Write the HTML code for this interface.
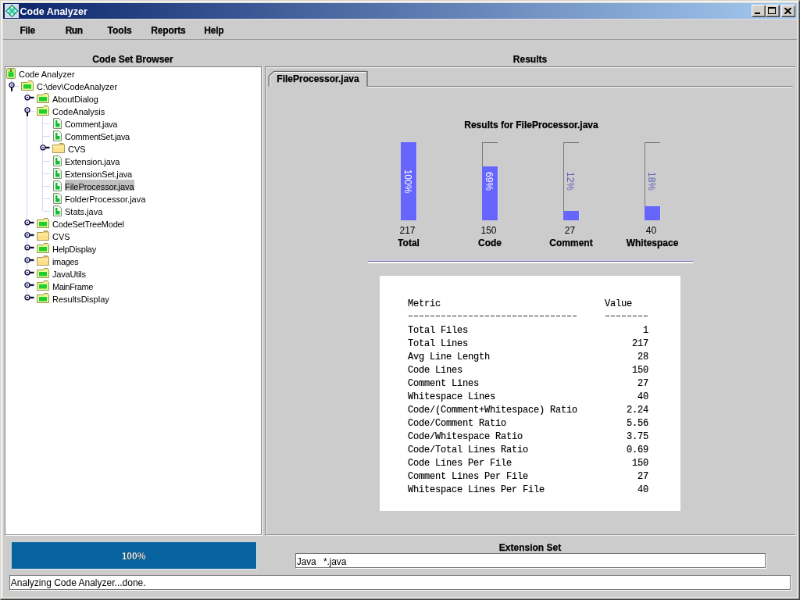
<!DOCTYPE html>
<html><head><meta charset="utf-8"><title>Code Analyzer</title>
<style>
html,body{margin:0;padding:0;background:#d4d0c8;overflow:hidden;}
body{width:800px;height:600px;position:relative;font-family:"Liberation Sans",sans-serif;}
#root{position:absolute;left:0;top:0;width:1024px;height:768px;transform:scale(0.78125);transform-origin:0 0;background:#d4d0c8;overflow:hidden;will-change:transform;}
.abs{position:absolute;}
.b{font-weight:bold;}
.lbl{position:absolute;font-size:12px;font-weight:bold;color:#000;white-space:nowrap;line-height:14px;-webkit-text-stroke:0.25px #000;}
.tr{position:absolute;font-size:11px;color:#000;white-space:nowrap;line-height:16px;height:16px;padding:0 1px;}
.mono{font-family:"Liberation Mono",monospace;font-size:12px;letter-spacing:-0.2px;line-height:17px;white-space:pre;color:#000;position:absolute;-webkit-text-stroke:0.15px #000;}
</style></head>
<body>
<div id="root">
<div class="abs" style="left:0;top:0;width:1024px;height:768px;background:#d4d0c8;box-sizing:border-box;border:1px solid;border-color:#d4d0c8 #404040 #404040 #d4d0c8;"></div>
<div class="abs" style="left:1px;top:1px;width:1022px;height:766px;box-sizing:border-box;border:1px solid;border-color:#ffffff #808080 #808080 #ffffff;"></div>
<div class="abs" style="left:2px;top:2px;width:1020px;height:764px;box-sizing:border-box;border:2px solid #e4e2dc;"></div>
<div class="abs" style="left:4px;top:4px;width:1016px;height:20px;background:linear-gradient(to right,#0a246a 0%,#a6caf0 100%);"></div>
<svg class="abs" style="left:6px;top:5px" width="18" height="18" viewBox="0 0 18 18">
<rect x="0" y="0" width="18" height="18" fill="#dadaea"/>
<polygon points="9.3,1.6 16.7,9 9.3,16.4 1.9,9" fill="#5ce0ba" stroke="#148a68" stroke-width="1.3"/>
<path d="M5.6,5.3 L13,12.7 M13,5.3 L5.6,12.7" stroke="#2aa482" stroke-width="0.9"/>
<circle cx="9.3" cy="4.4" r="1.5" fill="#c4fff4"/><circle cx="13.9" cy="9" r="1.5" fill="#c4fff4"/>
<circle cx="9.3" cy="13.6" r="1.5" fill="#c4fff4"/><circle cx="4.7" cy="9" r="1.5" fill="#c4fff4"/>
<circle cx="9.3" cy="9" r="1.3" fill="#2cae8c"/>
</svg>
<div class="abs b" style="left:25.5px;top:7.5px;font-size:12.5px;line-height:15px;color:#fff;white-space:nowrap;">Code Analyzer</div>
<div class="abs" style="left:962px;top:6px;width:18px;height:16px;background:#d4d0c8;box-sizing:border-box;border:1px solid;border-color:#fff #404040 #404040 #fff;"></div><div class="abs" style="left:963px;top:7px;width:16px;height:14px;box-sizing:border-box;border:1px solid;border-color:#d4d0c8 #808080 #808080 #d4d0c8;"></div><div class="abs" style="left:966px;top:16px;width:7px;height:2px;background:#000;"></div>
<div class="abs" style="left:980px;top:6px;width:18px;height:16px;background:#d4d0c8;box-sizing:border-box;border:1px solid;border-color:#fff #404040 #404040 #fff;"></div><div class="abs" style="left:981px;top:7px;width:16px;height:14px;box-sizing:border-box;border:1px solid;border-color:#d4d0c8 #808080 #808080 #d4d0c8;"></div><div class="abs" style="left:983px;top:9px;width:10px;height:9px;box-sizing:border-box;border:1px solid #000;border-top:2px solid #000;"></div>
<div class="abs" style="left:1000px;top:6px;width:18px;height:16px;background:#d4d0c8;box-sizing:border-box;border:1px solid;border-color:#fff #404040 #404040 #fff;"></div><div class="abs" style="left:1001px;top:7px;width:16px;height:14px;box-sizing:border-box;border:1px solid;border-color:#d4d0c8 #808080 #808080 #d4d0c8;"></div><svg class="abs" style="left:1004px;top:10px" width="9" height="8" viewBox="0 0 9 8"><path d="M0.5,0 L8.5,8 M8.5,0 L0.5,8" stroke="#000" stroke-width="2"/></svg>
<div class="abs" style="left:4px;top:24px;width:1016px;height:740px;background:#cccccc;"></div>
<div class="abs" style="left:4px;top:24px;width:1016px;height:1px;background:#dcdce6;"></div>
<div class="abs" style="left:4px;top:50px;width:1016px;height:1px;background:#999999;"></div>
<div class="lbl" style="left:25.6px;top:32px;letter-spacing:-0.4px;">File</div>
<div class="lbl" style="left:83.7px;top:32px;letter-spacing:-0.5px;">Run</div>
<div class="lbl" style="left:137.6px;top:32px;letter-spacing:0px;">Tools</div>
<div class="lbl" style="left:193.3px;top:32px;letter-spacing:-0.15px;">Reports</div>
<div class="lbl" style="left:261.3px;top:32px;letter-spacing:-0.2px;">Help</div>
<div class="lbl" style="left:4px;width:332px;text-align:center;top:69px;">Code Set Browser</div>
<div class="lbl" style="left:339px;width:679px;text-align:center;top:69px;">Results</div>
<div class="abs" style="left:7px;top:86px;width:329px;height:600px;box-sizing:border-box;border:1px solid #ffffff;"></div><div class="abs" style="left:6px;top:85px;width:329px;height:600px;box-sizing:border-box;border:1px solid #808080;background:#fff;"></div>
<div class="abs" style="left:14px;top:101px;width:1px;height:6px;background:#d4d4fa;"></div>
<div class="abs" style="left:15px;top:110px;width:10px;height:1px;background:#d4d4fa;"></div>
<div class="abs" style="left:34px;top:116px;width:1px;height:266px;background:#d4d4fa;"></div>
<div class="abs" style="left:54px;top:148px;width:1px;height:122px;background:#d4d4fa;"></div>
<svg class="abs" style="left:8.2px;top:87px" width="13" height="15" viewBox="0 0 13 15">
<rect x="0.5" y="0.5" width="11" height="13" rx="1.5" fill="#ccff88" stroke="#989058" stroke-width="1"/>
<rect x="2" y="2" width="8" height="4" fill="#aaee66"/>
<rect x="2.5" y="5.5" width="7" height="6" fill="#22cc33"/>
<rect x="5.2" y="1.5" width="1.6" height="3.5" fill="#665522"/>
</svg>
<div class="tr" style="left:23px;top:87px;">Code Analyzer</div>
<svg class="abs" style="left:0;top:0;overflow:visible" width="1" height="1">
<rect x="14" y="111.8" width="2" height="5" fill="#000011"/>
<circle cx="15" cy="108.8" r="3.05" fill="#e4e4ff" stroke="#000033" stroke-width="1.2"/>
<circle cx="15" cy="108.8" r="0.85" fill="#111144"/>
</svg>
<svg class="abs" style="left:27.4px;top:103px" width="16" height="14" viewBox="0 0 16 14">
<path d="M0.5,2.5 L8,2.5 L9.5,0.5 L14,0.5 L15.5,2.5 L15.5,12.5 L0.5,12.5 Z" fill="#e0ff90" stroke="#a09050" stroke-width="1"/><path d="M9.5,1 L14,1 L15,2.5 L8.5,2.5 Z" fill="#f0dc90"/><rect x="3" y="5" width="10" height="5.5" fill="#22cc33"/>
</svg>
<div class="tr" style="left:46px;top:103px;letter-spacing:-0.05px;">C:\dev\CodeAnalyzer</div>
<div class="abs" style="left:35px;top:126px;width:9px;height:1px;background:#d4d4fa;"></div>
<svg class="abs" style="left:0;top:0;overflow:visible" width="1" height="1">
<rect x="38" y="123.8" width="5.5" height="2" fill="#000011"/>
<circle cx="35" cy="124.8" r="3.05" fill="#e4e4ff" stroke="#000033" stroke-width="1.2"/>
<circle cx="35" cy="124.8" r="0.85" fill="#111144"/>
</svg>
<svg class="abs" style="left:47.4px;top:119px" width="16" height="14" viewBox="0 0 16 14">
<path d="M0.5,2.5 L8,2.5 L9.5,0.5 L14,0.5 L15.5,2.5 L15.5,12.5 L0.5,12.5 Z" fill="#e0ff90" stroke="#a09050" stroke-width="1"/><path d="M9.5,1 L14,1 L15,2.5 L8.5,2.5 Z" fill="#f0dc90"/><rect x="3" y="5" width="10" height="5.5" fill="#22cc33"/>
</svg>
<div class="tr" style="left:66px;top:119px;letter-spacing:-0.1px;">AboutDialog</div>
<div class="abs" style="left:35px;top:142px;width:9px;height:1px;background:#d4d4fa;"></div>
<svg class="abs" style="left:0;top:0;overflow:visible" width="1" height="1">
<rect x="34" y="143.8" width="2" height="5" fill="#000011"/>
<circle cx="35" cy="140.8" r="3.05" fill="#e4e4ff" stroke="#000033" stroke-width="1.2"/>
<circle cx="35" cy="140.8" r="0.85" fill="#111144"/>
</svg>
<svg class="abs" style="left:47.4px;top:135px" width="16" height="14" viewBox="0 0 16 14">
<path d="M0.5,2.5 L8,2.5 L9.5,0.5 L14,0.5 L15.5,2.5 L15.5,12.5 L0.5,12.5 Z" fill="#e0ff90" stroke="#a09050" stroke-width="1"/><path d="M9.5,1 L14,1 L15,2.5 L8.5,2.5 Z" fill="#f0dc90"/><rect x="3" y="5" width="10" height="5.5" fill="#22cc33"/>
</svg>
<div class="tr" style="left:66px;top:135px;">CodeAnalysis</div>
<div class="abs" style="left:55px;top:158px;width:9px;height:1px;background:#d4d4fa;"></div>
<svg class="abs" style="left:68px;top:150.5px" width="12" height="15" viewBox="0 0 12 15">
<path d="M0.5,0.5 L7.5,0.5 L10.5,3.5 L10.5,13.5 L0.5,13.5 Z" fill="#ffffff" stroke="#8a8a80" stroke-width="1"/>
<path d="M1.5,1.5 L7,1.5 L9.5,4 L9.5,12.5 L1.5,12.5 Z" fill="none" stroke="#ccffcc" stroke-width="1"/>
<path d="M3,3 L5.5,3 L5.5,7 L8.5,7 L8.5,11.5 L3,11.5 Z" fill="#11bb33"/>
</svg>
<div class="tr" style="left:82px;top:151px;letter-spacing:-0.33px;">Comment.java</div>
<div class="abs" style="left:55px;top:174px;width:9px;height:1px;background:#d4d4fa;"></div>
<svg class="abs" style="left:68px;top:166.5px" width="12" height="15" viewBox="0 0 12 15">
<path d="M0.5,0.5 L7.5,0.5 L10.5,3.5 L10.5,13.5 L0.5,13.5 Z" fill="#ffffff" stroke="#8a8a80" stroke-width="1"/>
<path d="M1.5,1.5 L7,1.5 L9.5,4 L9.5,12.5 L1.5,12.5 Z" fill="none" stroke="#ccffcc" stroke-width="1"/>
<path d="M3,3 L5.5,3 L5.5,7 L8.5,7 L8.5,11.5 L3,11.5 Z" fill="#11bb33"/>
</svg>
<div class="tr" style="left:82px;top:167px;letter-spacing:-0.3px;">CommentSet.java</div>
<div class="abs" style="left:55px;top:190px;width:9px;height:1px;background:#d4d4fa;"></div>
<svg class="abs" style="left:0;top:0;overflow:visible" width="1" height="1">
<rect x="58" y="187.8" width="5.5" height="2" fill="#000011"/>
<circle cx="55" cy="188.8" r="3.05" fill="#e4e4ff" stroke="#000033" stroke-width="1.2"/>
<circle cx="55" cy="188.8" r="0.85" fill="#111144"/>
</svg>
<svg class="abs" style="left:67.4px;top:183px" width="16" height="14" viewBox="0 0 16 14">
<path d="M0.5,2.5 L8,2.5 L9.5,0.5 L14,0.5 L15.5,2.5 L15.5,12.5 L0.5,12.5 Z" fill="#ffe08a" stroke="#a89858" stroke-width="1"/><path d="M9.5,1 L14,1 L15,2.5 L8.5,2.5 Z" fill="#c8ac68"/><rect x="1.5" y="3.5" width="13" height="3" fill="#ffeaa0"/>
</svg>
<div class="tr" style="left:86px;top:183px;">CVS</div>
<div class="abs" style="left:55px;top:206px;width:9px;height:1px;background:#d4d4fa;"></div>
<svg class="abs" style="left:68px;top:198.5px" width="12" height="15" viewBox="0 0 12 15">
<path d="M0.5,0.5 L7.5,0.5 L10.5,3.5 L10.5,13.5 L0.5,13.5 Z" fill="#ffffff" stroke="#8a8a80" stroke-width="1"/>
<path d="M1.5,1.5 L7,1.5 L9.5,4 L9.5,12.5 L1.5,12.5 Z" fill="none" stroke="#ccffcc" stroke-width="1"/>
<path d="M3,3 L5.5,3 L5.5,7 L8.5,7 L8.5,11.5 L3,11.5 Z" fill="#11bb33"/>
</svg>
<div class="tr" style="left:82px;top:199px;letter-spacing:-0.1px;">Extension.java</div>
<div class="abs" style="left:55px;top:222px;width:9px;height:1px;background:#d4d4fa;"></div>
<svg class="abs" style="left:68px;top:214.5px" width="12" height="15" viewBox="0 0 12 15">
<path d="M0.5,0.5 L7.5,0.5 L10.5,3.5 L10.5,13.5 L0.5,13.5 Z" fill="#ffffff" stroke="#8a8a80" stroke-width="1"/>
<path d="M1.5,1.5 L7,1.5 L9.5,4 L9.5,12.5 L1.5,12.5 Z" fill="none" stroke="#ccffcc" stroke-width="1"/>
<path d="M3,3 L5.5,3 L5.5,7 L8.5,7 L8.5,11.5 L3,11.5 Z" fill="#11bb33"/>
</svg>
<div class="tr" style="left:82px;top:215px;letter-spacing:-0.12px;">ExtensionSet.java</div>
<div class="abs" style="left:55px;top:238px;width:9px;height:1px;background:#d4d4fa;"></div>
<svg class="abs" style="left:68px;top:230.5px" width="12" height="15" viewBox="0 0 12 15">
<path d="M0.5,0.5 L7.5,0.5 L10.5,3.5 L10.5,13.5 L0.5,13.5 Z" fill="#ffffff" stroke="#8a8a80" stroke-width="1"/>
<path d="M1.5,1.5 L7,1.5 L9.5,4 L9.5,12.5 L1.5,12.5 Z" fill="none" stroke="#ccffcc" stroke-width="1"/>
<path d="M3,3 L5.5,3 L5.5,7 L8.5,7 L8.5,11.5 L3,11.5 Z" fill="#11bb33"/>
</svg>
<div class="abs" style="left:82.5px;top:230px;width:89px;height:14px;background:#c0c0c0;"></div>
<div class="tr" style="left:82px;top:231px;letter-spacing:-0.08px;">FileProcessor.java</div>
<div class="abs" style="left:55px;top:254px;width:9px;height:1px;background:#d4d4fa;"></div>
<svg class="abs" style="left:68px;top:246.5px" width="12" height="15" viewBox="0 0 12 15">
<path d="M0.5,0.5 L7.5,0.5 L10.5,3.5 L10.5,13.5 L0.5,13.5 Z" fill="#ffffff" stroke="#8a8a80" stroke-width="1"/>
<path d="M1.5,1.5 L7,1.5 L9.5,4 L9.5,12.5 L1.5,12.5 Z" fill="none" stroke="#ccffcc" stroke-width="1"/>
<path d="M3,3 L5.5,3 L5.5,7 L8.5,7 L8.5,11.5 L3,11.5 Z" fill="#11bb33"/>
</svg>
<div class="tr" style="left:82px;top:247px;">FolderProcessor.java</div>
<div class="abs" style="left:55px;top:270px;width:9px;height:1px;background:#d4d4fa;"></div>
<svg class="abs" style="left:68px;top:262.5px" width="12" height="15" viewBox="0 0 12 15">
<path d="M0.5,0.5 L7.5,0.5 L10.5,3.5 L10.5,13.5 L0.5,13.5 Z" fill="#ffffff" stroke="#8a8a80" stroke-width="1"/>
<path d="M1.5,1.5 L7,1.5 L9.5,4 L9.5,12.5 L1.5,12.5 Z" fill="none" stroke="#ccffcc" stroke-width="1"/>
<path d="M3,3 L5.5,3 L5.5,7 L8.5,7 L8.5,11.5 L3,11.5 Z" fill="#11bb33"/>
</svg>
<div class="tr" style="left:82px;top:263px;">Stats.java</div>
<div class="abs" style="left:35px;top:286px;width:9px;height:1px;background:#d4d4fa;"></div>
<svg class="abs" style="left:0;top:0;overflow:visible" width="1" height="1">
<rect x="38" y="283.8" width="5.5" height="2" fill="#000011"/>
<circle cx="35" cy="284.8" r="3.05" fill="#e4e4ff" stroke="#000033" stroke-width="1.2"/>
<circle cx="35" cy="284.8" r="0.85" fill="#111144"/>
</svg>
<svg class="abs" style="left:47.4px;top:279px" width="16" height="14" viewBox="0 0 16 14">
<path d="M0.5,2.5 L8,2.5 L9.5,0.5 L14,0.5 L15.5,2.5 L15.5,12.5 L0.5,12.5 Z" fill="#e0ff90" stroke="#a09050" stroke-width="1"/><path d="M9.5,1 L14,1 L15,2.5 L8.5,2.5 Z" fill="#f0dc90"/><rect x="3" y="5" width="10" height="5.5" fill="#22cc33"/>
</svg>
<div class="tr" style="left:66px;top:279px;letter-spacing:-0.2px;">CodeSetTreeModel</div>
<div class="abs" style="left:35px;top:302px;width:9px;height:1px;background:#d4d4fa;"></div>
<svg class="abs" style="left:0;top:0;overflow:visible" width="1" height="1">
<rect x="38" y="299.8" width="5.5" height="2" fill="#000011"/>
<circle cx="35" cy="300.8" r="3.05" fill="#e4e4ff" stroke="#000033" stroke-width="1.2"/>
<circle cx="35" cy="300.8" r="0.85" fill="#111144"/>
</svg>
<svg class="abs" style="left:47.4px;top:295px" width="16" height="14" viewBox="0 0 16 14">
<path d="M0.5,2.5 L8,2.5 L9.5,0.5 L14,0.5 L15.5,2.5 L15.5,12.5 L0.5,12.5 Z" fill="#ffe08a" stroke="#a89858" stroke-width="1"/><path d="M9.5,1 L14,1 L15,2.5 L8.5,2.5 Z" fill="#c8ac68"/><rect x="1.5" y="3.5" width="13" height="3" fill="#ffeaa0"/>
</svg>
<div class="tr" style="left:66px;top:295px;">CVS</div>
<div class="abs" style="left:35px;top:318px;width:9px;height:1px;background:#d4d4fa;"></div>
<svg class="abs" style="left:0;top:0;overflow:visible" width="1" height="1">
<rect x="38" y="315.8" width="5.5" height="2" fill="#000011"/>
<circle cx="35" cy="316.8" r="3.05" fill="#e4e4ff" stroke="#000033" stroke-width="1.2"/>
<circle cx="35" cy="316.8" r="0.85" fill="#111144"/>
</svg>
<svg class="abs" style="left:47.4px;top:311px" width="16" height="14" viewBox="0 0 16 14">
<path d="M0.5,2.5 L8,2.5 L9.5,0.5 L14,0.5 L15.5,2.5 L15.5,12.5 L0.5,12.5 Z" fill="#e0ff90" stroke="#a09050" stroke-width="1"/><path d="M9.5,1 L14,1 L15,2.5 L8.5,2.5 Z" fill="#f0dc90"/><rect x="3" y="5" width="10" height="5.5" fill="#22cc33"/>
</svg>
<div class="tr" style="left:66px;top:311px;letter-spacing:-0.25px;">HelpDisplay</div>
<div class="abs" style="left:35px;top:334px;width:9px;height:1px;background:#d4d4fa;"></div>
<svg class="abs" style="left:0;top:0;overflow:visible" width="1" height="1">
<rect x="38" y="331.8" width="5.5" height="2" fill="#000011"/>
<circle cx="35" cy="332.8" r="3.05" fill="#e4e4ff" stroke="#000033" stroke-width="1.2"/>
<circle cx="35" cy="332.8" r="0.85" fill="#111144"/>
</svg>
<svg class="abs" style="left:47.4px;top:327px" width="16" height="14" viewBox="0 0 16 14">
<path d="M0.5,2.5 L8,2.5 L9.5,0.5 L14,0.5 L15.5,2.5 L15.5,12.5 L0.5,12.5 Z" fill="#ffe08a" stroke="#a89858" stroke-width="1"/><path d="M9.5,1 L14,1 L15,2.5 L8.5,2.5 Z" fill="#c8ac68"/><rect x="1.5" y="3.5" width="13" height="3" fill="#ffeaa0"/>
</svg>
<div class="tr" style="left:66px;top:327px;letter-spacing:-0.35px;">images</div>
<div class="abs" style="left:35px;top:350px;width:9px;height:1px;background:#d4d4fa;"></div>
<svg class="abs" style="left:0;top:0;overflow:visible" width="1" height="1">
<rect x="38" y="347.8" width="5.5" height="2" fill="#000011"/>
<circle cx="35" cy="348.8" r="3.05" fill="#e4e4ff" stroke="#000033" stroke-width="1.2"/>
<circle cx="35" cy="348.8" r="0.85" fill="#111144"/>
</svg>
<svg class="abs" style="left:47.4px;top:343px" width="16" height="14" viewBox="0 0 16 14">
<path d="M0.5,2.5 L8,2.5 L9.5,0.5 L14,0.5 L15.5,2.5 L15.5,12.5 L0.5,12.5 Z" fill="#e0ff90" stroke="#a09050" stroke-width="1"/><path d="M9.5,1 L14,1 L15,2.5 L8.5,2.5 Z" fill="#f0dc90"/><rect x="3" y="5" width="10" height="5.5" fill="#22cc33"/>
</svg>
<div class="tr" style="left:66px;top:343px;letter-spacing:-0.2px;">JavaUtils</div>
<div class="abs" style="left:35px;top:366px;width:9px;height:1px;background:#d4d4fa;"></div>
<svg class="abs" style="left:0;top:0;overflow:visible" width="1" height="1">
<rect x="38" y="363.8" width="5.5" height="2" fill="#000011"/>
<circle cx="35" cy="364.8" r="3.05" fill="#e4e4ff" stroke="#000033" stroke-width="1.2"/>
<circle cx="35" cy="364.8" r="0.85" fill="#111144"/>
</svg>
<svg class="abs" style="left:47.4px;top:359px" width="16" height="14" viewBox="0 0 16 14">
<path d="M0.5,2.5 L8,2.5 L9.5,0.5 L14,0.5 L15.5,2.5 L15.5,12.5 L0.5,12.5 Z" fill="#e0ff90" stroke="#a09050" stroke-width="1"/><path d="M9.5,1 L14,1 L15,2.5 L8.5,2.5 Z" fill="#f0dc90"/><rect x="3" y="5" width="10" height="5.5" fill="#22cc33"/>
</svg>
<div class="tr" style="left:66px;top:359px;letter-spacing:-0.4px;">MainFrame</div>
<div class="abs" style="left:35px;top:382px;width:9px;height:1px;background:#d4d4fa;"></div>
<svg class="abs" style="left:0;top:0;overflow:visible" width="1" height="1">
<rect x="38" y="379.8" width="5.5" height="2" fill="#000011"/>
<circle cx="35" cy="380.8" r="3.05" fill="#e4e4ff" stroke="#000033" stroke-width="1.2"/>
<circle cx="35" cy="380.8" r="0.85" fill="#111144"/>
</svg>
<svg class="abs" style="left:47.4px;top:375px" width="16" height="14" viewBox="0 0 16 14">
<path d="M0.5,2.5 L8,2.5 L9.5,0.5 L14,0.5 L15.5,2.5 L15.5,12.5 L0.5,12.5 Z" fill="#e0ff90" stroke="#a09050" stroke-width="1"/><path d="M9.5,1 L14,1 L15,2.5 L8.5,2.5 Z" fill="#f0dc90"/><rect x="3" y="5" width="10" height="5.5" fill="#22cc33"/>
</svg>
<div class="tr" style="left:66px;top:375px;">ResultsDisplay</div>
<div class="abs" style="left:340px;top:86px;width:679px;height:600px;box-sizing:border-box;border:1px solid #f0f0f0;"></div><div class="abs" style="left:339px;top:85px;width:679px;height:600px;box-sizing:border-box;border:1px solid #808080;"></div>
<svg class="abs" style="left:343px;top:90px" width="672" height="24" viewBox="0 0 672 24">
<path d="M1.2,20.5 L1.2,7.5 L7.5,1.5 L127,1.5 L127,20.5" fill="none" stroke="#6a6a6a" stroke-width="1.4"/>
<path d="M2.5,20.5 L2.5,8 L8,2.5 L126,2.5" fill="none" stroke="#ffffff" stroke-width="1"/>
<path d="M127,20.5 L671.5,20.5" fill="none" stroke="#777777" stroke-width="1"/>
<path d="M127.5,21.5 L671,21.5" fill="none" stroke="#ffffff" stroke-width="1"/>
</svg>
<div class="lbl" style="left:354.3px;top:94px;">FileProcessor.java</div>
<div class="lbl" style="left:480px;width:400px;text-align:center;top:153px;">Results for FileProcessor.java</div>
<div class="abs" style="left:513px;top:182px;width:20px;height:100px;box-sizing:border-box;border-left:1px solid #7a7a7a;border-top:1px solid #7a7a7a;"></div><div class="abs" style="left:533px;top:182px;width:1px;height:100px;background:#d8d8e2;"></div><div class="abs" style="left:513px;top:182px;width:20px;height:100px;background:#6666ff;"></div><div class="abs" style="left:513px;top:182px;width:20px;height:100px;overflow:hidden;"><div class="abs" style="left:0;top:50.0px;width:0;height:0;"><div style="position:absolute;left:9px;top:0;transform:translate(-50%,-50%) rotate(90deg);font-size:12px;line-height:14px;color:#ffffff;white-space:nowrap;">100%</div></div></div><div class="abs" style="left:461.5px;width:120px;text-align:center;top:288px;font-size:12px;line-height:14px;">217</div><div class="lbl" style="left:463px;width:120px;text-align:center;top:304px;">Total</div>
<div class="abs" style="left:617px;top:182px;width:20px;height:100px;box-sizing:border-box;border-left:1px solid #7a7a7a;border-top:1px solid #7a7a7a;"></div><div class="abs" style="left:637px;top:213px;width:1px;height:69px;background:#d8d8e2;"></div><div class="abs" style="left:617px;top:213px;width:20px;height:69px;background:#6666ff;"></div><div class="abs" style="left:617px;top:182px;width:20px;height:31px;overflow:hidden;"><div class="abs" style="left:0;top:50.0px;width:0;height:0;"><div style="position:absolute;left:9px;top:0;transform:translate(-50%,-50%) rotate(90deg);font-size:12px;line-height:14px;color:#6262b8;white-space:nowrap;">69%</div></div></div><div class="abs" style="left:617px;top:213px;width:20px;height:69px;overflow:hidden;"><div class="abs" style="left:0;top:19.0px;width:0;height:0;"><div style="position:absolute;left:9px;top:0;transform:translate(-50%,-50%) rotate(90deg);font-size:12px;line-height:14px;color:#ffffff;white-space:nowrap;">69%</div></div></div><div class="abs" style="left:565.5px;width:120px;text-align:center;top:288px;font-size:12px;line-height:14px;">150</div><div class="lbl" style="left:567px;width:120px;text-align:center;top:304px;">Code</div>
<div class="abs" style="left:721px;top:182px;width:20px;height:100px;box-sizing:border-box;border-left:1px solid #7a7a7a;border-top:1px solid #7a7a7a;"></div><div class="abs" style="left:741px;top:270px;width:1px;height:12px;background:#d8d8e2;"></div><div class="abs" style="left:721px;top:270px;width:20px;height:12px;background:#6666ff;"></div><div class="abs" style="left:721px;top:182px;width:20px;height:88px;overflow:hidden;"><div class="abs" style="left:0;top:50.0px;width:0;height:0;"><div style="position:absolute;left:9px;top:0;transform:translate(-50%,-50%) rotate(90deg);font-size:12px;line-height:14px;color:#6262b8;white-space:nowrap;">12%</div></div></div><div class="abs" style="left:721px;top:270px;width:20px;height:12px;overflow:hidden;"><div class="abs" style="left:0;top:-38.0px;width:0;height:0;"><div style="position:absolute;left:9px;top:0;transform:translate(-50%,-50%) rotate(90deg);font-size:12px;line-height:14px;color:#ffffff;white-space:nowrap;">12%</div></div></div><div class="abs" style="left:669.5px;width:120px;text-align:center;top:288px;font-size:12px;line-height:14px;">27</div><div class="lbl" style="left:671px;width:120px;text-align:center;top:304px;">Comment</div>
<div class="abs" style="left:825px;top:182px;width:20px;height:100px;box-sizing:border-box;border-left:1px solid #7a7a7a;border-top:1px solid #7a7a7a;"></div><div class="abs" style="left:845px;top:264px;width:1px;height:18px;background:#d8d8e2;"></div><div class="abs" style="left:825px;top:264px;width:20px;height:18px;background:#6666ff;"></div><div class="abs" style="left:825px;top:182px;width:20px;height:82px;overflow:hidden;"><div class="abs" style="left:0;top:50.0px;width:0;height:0;"><div style="position:absolute;left:9px;top:0;transform:translate(-50%,-50%) rotate(90deg);font-size:12px;line-height:14px;color:#6262b8;white-space:nowrap;">18%</div></div></div><div class="abs" style="left:825px;top:264px;width:20px;height:18px;overflow:hidden;"><div class="abs" style="left:0;top:-32.0px;width:0;height:0;"><div style="position:absolute;left:9px;top:0;transform:translate(-50%,-50%) rotate(90deg);font-size:12px;line-height:14px;color:#ffffff;white-space:nowrap;">18%</div></div></div><div class="abs" style="left:773.5px;width:120px;text-align:center;top:288px;font-size:12px;line-height:14px;">40</div><div class="lbl" style="left:775px;width:120px;text-align:center;top:304px;">Whitespace</div>
<div class="abs" style="left:471px;top:332.4px;width:416px;height:1.6px;background:#ccccde;"></div>
<div class="abs" style="left:471px;top:334px;width:416px;height:1.3px;background:#7070a0;"></div>
<div class="abs" style="left:471px;top:335.3px;width:416px;height:1.5px;background:#ffffff;"></div>
<div class="abs" style="left:486px;top:353px;width:385px;height:301px;background:#fff;"></div>
<div class="mono" style="left:522px;top:381px;">Metric                              Value

Total Files                                1
Total Lines                              217
Avg Line Length                           28
Code Lines                               150
Comment Lines                             27
Whitespace Lines                          40
Code/(Comment+Whitespace) Ratio         2.24
Code/Comment Ratio                      5.56
Code/Whitespace Ratio                   3.75
Code/Total Lines Ratio                  0.69
Code Lines Per File                      150
Comment Lines Per File                    27
Whitespace Lines Per File                 40</div>
<div class="abs" style="left:522.6px;top:404.4px;width:215.6px;height:1px;background:repeating-linear-gradient(to right,#2a2a2a 0,#2a2a2a 5.2px,transparent 5.2px,transparent 7px);"></div>
<div class="abs" style="left:774.6px;top:404.4px;width:54.6px;height:1px;background:repeating-linear-gradient(to right,#2a2a2a 0,#2a2a2a 5.2px,transparent 5.2px,transparent 7px);"></div>
<div class="abs" style="left:14.5px;top:694px;width:314.5px;height:35px;background:#e4ecf4;"></div>
<div class="abs" style="left:14.5px;top:694px;width:313.5px;height:34px;background:#06639f;"></div>
<div class="lbl" style="left:14px;width:314px;text-align:center;top:705px;color:#fff;">100%</div>
<div class="lbl" style="left:339px;width:679px;text-align:center;top:694px;">Extension Set</div>
<div class="abs" style="left:379px;top:709px;width:602px;height:19px;box-sizing:border-box;border:1px solid #ffffff;"></div><div class="abs" style="left:378px;top:708px;width:602px;height:19px;box-sizing:border-box;border:1px solid #747474;background:#fff;"></div><div class="abs" style="left:379.8px;top:711.5px;font-size:12px;line-height:14px;white-space:pre;"><span style="letter-spacing:-0.15px">Java   *.java</span></div>
<div class="abs" style="left:13px;top:737px;width:1000px;height:19px;box-sizing:border-box;border:1px solid #ffffff;"></div><div class="abs" style="left:12px;top:736px;width:1000px;height:19px;box-sizing:border-box;border:1px solid #747474;background:#fff;"></div><div class="abs" style="left:13.8px;top:739px;font-size:12px;line-height:14px;white-space:pre;">Analyzing Code Analyzer...done.</div>
</div>
</body></html>
